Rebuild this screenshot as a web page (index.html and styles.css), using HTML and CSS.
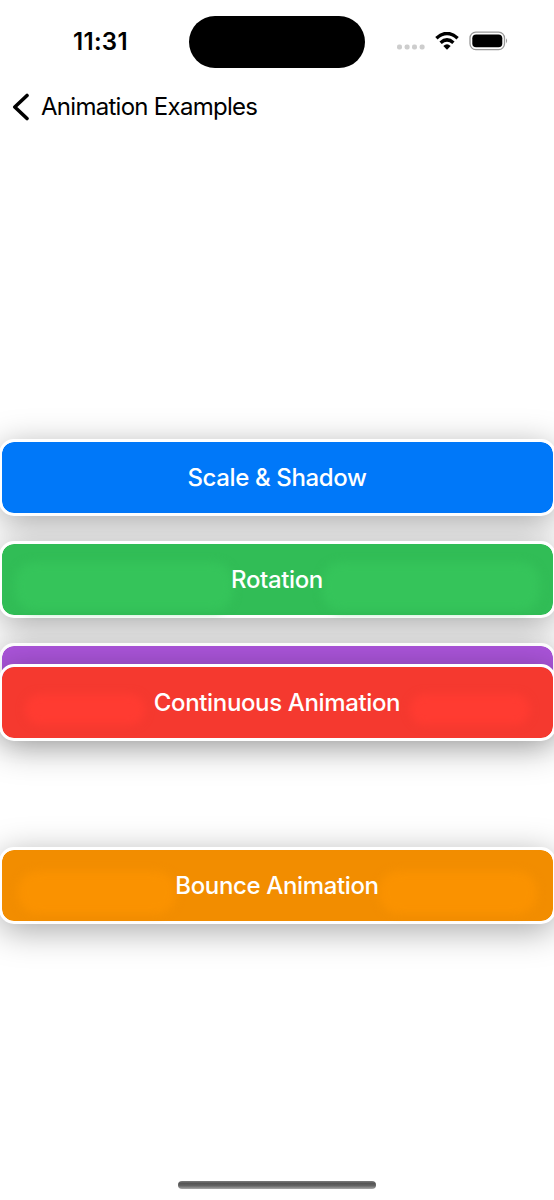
FILE: index.html
```html
<!DOCTYPE html>
<html lang="en">
<head>
<meta charset="utf-8">
<title>Animation Examples</title>
<link rel="stylesheet" href="styles.css">
</head>
<body>
<div class="screen">
  <header class="status">
    <div class="time">11:31</div>
    <div class="island"></div>
    <div class="indicators">
      <svg class="dots" width="28" height="6" viewBox="0 0 28 6" fill="#cdcdcd"><rect x="0" y=".5" width="5" height="5" rx="2"/><rect x="7.6" y=".5" width="5" height="5" rx="2"/><rect x="15" y=".5" width="5" height="5" rx="2"/><rect x="22.6" y=".5" width="5" height="5" rx="2"/></svg>
      <svg class="wifi" width="24" height="18" viewBox="0 0 24 18"><path d="M1.4 6.2Q12-3.2 22.6 6.2M5.6 10.7Q12 5.1 18.4 10.7" fill="none" stroke="#000" stroke-width="3.5"/><path d="M8.3 14Q12 10.7 15.7 14L12 17.7Z"/></svg>
      <svg class="battery" width="39" height="20" viewBox="0 0 39 20"><rect x="1" y="1.2" width="34.5" height="17.4" rx="5.8" fill="none" stroke="#999" stroke-width="1.3"/><rect x="3.3" y="3.5" width="30" height="12.8" rx="3.8"/><path d="M37 7.2Q39.2 9.8 37 12.5Z" fill="#999"/></svg>
    </div>
  </header>
  <nav class="nav">
    <svg width="18" height="28" viewBox="0 0 18 28"><path d="M15 2.5L2.8 14L15 25.5" fill="none" stroke="#000" stroke-width="3.6" stroke-linecap="round" stroke-linejoin="round"/></svg>
    <span class="title">Animation Examples</span>
  </nav>
  <main class="list">
    <button class="card blue"><span>Scale &amp; Shadow</span></button>
    <button class="card green"><span>Rotation</span></button>
    <button class="card purple"></button>
    <button class="card red"><span>Continuous Animation</span></button>
    <button class="card orange"><span>Bounce Animation</span></button>
  </main>
  <footer class="home"><div class="bar"></div></footer>
</div>
</body>
</html>
```
FILE: styles.css
```css
body {
  margin: 0;
  background: #fff;
  font-family: Inter, "Liberation Sans", sans-serif;
}
.screen {
  height: 1200px;
  overflow: hidden;
  display: flex;
  flex-direction: column;
}
.status {
  display: grid;
  grid-template-columns: 189px 176px 189px;
  padding-top: 16px;
  height: 52px;
  align-items: center;
}
.time {
  padding: 0 0 2px 73px;
  font-size: 24px;
  font-weight: 600;
  letter-spacing: 0.3px;
}
.island {
  height: 52px;
  border-radius: 26px;
  background: #000;
}
.indicators {
  display: flex;
  align-items: center;
  padding-left: 32px;
  padding-bottom: 2px;
}
.dots { margin-top: 12px; }
.wifi { margin-left: 10px; }
.battery { margin-left: 10px; }
.nav {
  display: flex;
  align-items: center;
  height: 78px;
  padding-left: 12px;
}
.title {
  margin-left: 11px;
  padding-bottom: 1px;
  font-size: 24px;
  letter-spacing: -0.72px;
}
.list {
  display: flex;
  flex-direction: column;
  gap: 25px;
  padding-top: 293px;
  margin: 0 -1.5px;
}
.card {
  position: relative;
  height: 77px;
  box-sizing: border-box;
  padding: 0;
  border: 3px solid #fff;
  border-radius: 15px;
  background-clip: padding-box;
  color: #fff;
  font: 550 24px Inter, "Liberation Sans", sans-serif;
  letter-spacing: -0.36px;
  box-shadow: 0 7px 34px rgba(0, 0, 0, .34);
}
.card span {
  position: relative;
  z-index: 1;
}
/* Lit areas on both sides of the label */
.card::before,
.card::after {
  content: "";
  position: absolute;
  top: var(--glow-top);
  bottom: var(--glow-bottom);
  width: var(--glow-width);
  border-radius: 20px;
  background: var(--glow);
  filter: blur(4px);
}
.card::before { left: var(--glow-inset); }
.card::after { right: var(--glow-inset); }
.blue { background-color: #0078f9; }
.green {
  background-color: #31bd56;
  isolation: isolate;
  --glow: #35c45a;
  --glow-top: 18px;
  --glow-bottom: 4px;
  --glow-width: 218px;
  --glow-inset: 13px;
}
.purple { background-color: #aa54d9; }
.red {
  background-color: #f5392f;
  z-index: 2;
  transform: translateY(-81px);
  --glow: #ff3b31;
  --glow-top: 27px;
  --glow-bottom: 13px;
  --glow-width: 120px;
  --glow-inset: 23px;
}
.orange {
  background-color: #f28d00;
  --glow: #fa9200;
  --glow-top: 21px;
  --glow-bottom: 7px;
  --glow-width: 158px;
  --glow-inset: 16px;
}
.home {
  margin-top: auto;
  display: flex;
  justify-content: center;
  padding-bottom: 11px;
}
.bar {
  width: 198px;
  height: 8px;
  border-radius: 4px;
  background: linear-gradient(#7b7b7b, #555 30%, #646464 60%, #aaa);
}
```
